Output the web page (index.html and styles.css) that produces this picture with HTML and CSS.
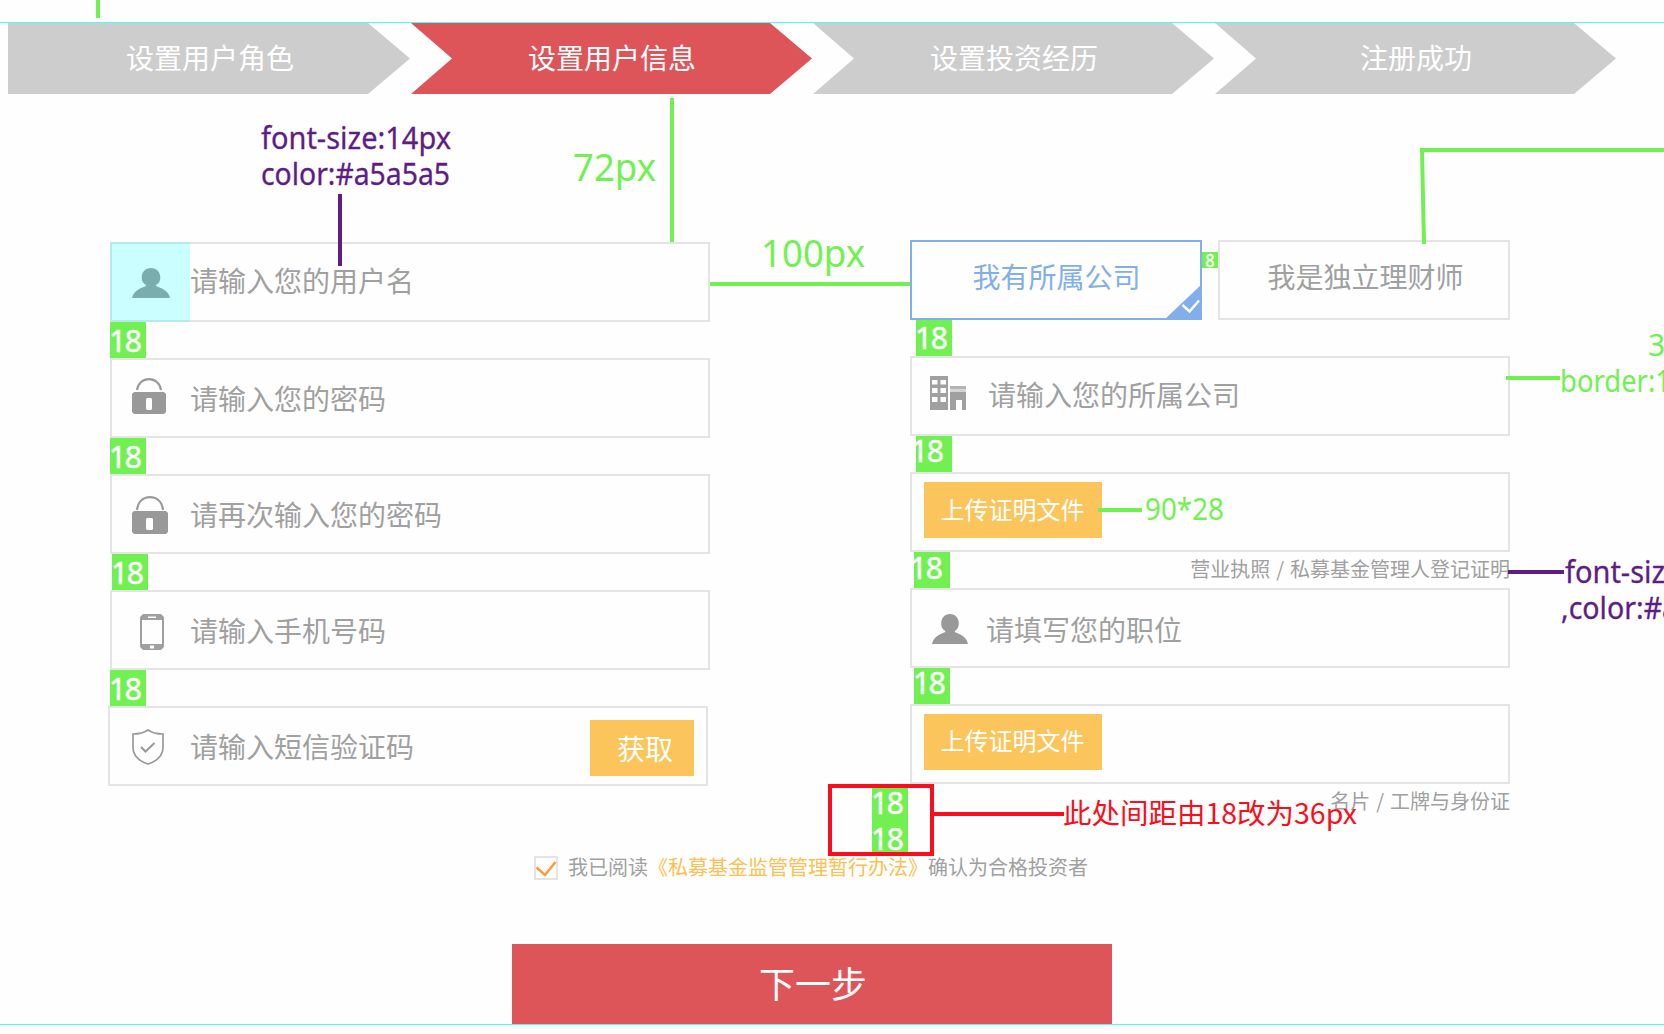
FILE: index.html
```html
<!DOCTYPE html>
<html lang="zh-CN">
<head>
<meta charset="utf-8">
<title>设置用户信息</title>
<link rel="stylesheet" href="styles.css">
</head>
<body>
<div class="page">
  <header class="steps">
    <div class="step step-first">设置用户角色</div>
    <div class="step step-active">设置用户信息</div>
    <div class="step">设置投资经历</div>
    <div class="step">注册成功</div>
  </header>

  <main class="form">
    <section class="col col-left">
      <div class="field">
        <span class="icon icon-user">
          <svg width="38" height="30" viewBox="0 0 38 30"><path fill="#999" d="M19 0c5.500 0 9.300 4 9.300 9.500 0 3.500-1.500 6-4.300 7.500v1c2 1 4 1.600 6 2.600 4 2 7 5 8 9.400H0c1-4.400 4-7.400 8-9.400 2-1 4-1.600 6-2.600v-1c-2.800-1.500-4.300-4-4.300-7.500C9.700 4 13.500 0 19 0z"/></svg>
        </span>
        <span class="ph up">请输入您的用户名</span>
      </div>
      <div class="field">
        <span class="icon icon-lock">
          <svg width="34" height="36" viewBox="0 0 34 36"><path d="M5 12C6 5 11 1.200 17 1.200S28 5 29 12" fill="none" stroke="#999" stroke-width="2.200"/><path fill="#999" fill-rule="evenodd" d="M2 14h30l2 2v18l-2 2H2l-2-2V16zM15 20l-1 1v10l1 1h4l1-1V21l-1-1z"/></svg>
        </span>
        <span class="ph">请输入您的密码</span>
      </div>
      <div class="field">
        <span class="icon icon-relock">
          <svg width="36" height="38" viewBox="0 0 36 38"><path d="M5 14C6 6 11 1.200 18 1.200S30 6 31 14" fill="none" stroke="#999" stroke-width="2.200"/><path fill="#999" fill-rule="evenodd" d="M2 15h32l2 2v19l-2 2H2l-2-2V17zM15 22l-1 1v10l1 1h5l1-1V23l-1-1z"/></svg>
        </span>
        <span class="ph">请再次输入您的密码</span>
      </div>
      <div class="field">
        <span class="icon icon-phone">
          <svg width="24" height="36" viewBox="0 0 24 36"><path fill="#a0a0a0" fill-rule="evenodd" d="M3 0h18l3 3v30l-3 3H3l-3-3V3zM2 6v24h20V6zM8 2.500v1.500h8V2.500zM10 31.500v3h4v-3z"/></svg>
        </span>
        <span class="ph">请输入手机号码</span>
      </div>
      <div class="field field-code">
        <span class="icon">
          <svg width="32" height="36" viewBox="0 0 32 36" fill="none" stroke="#999"><path stroke-width="1.700" d="M16 1C12.500 3.500 7 5 1 5v13c0 8 6 14 15 17 9-3 15-9 15-17V5C25 5 19.500 3.500 16 1z"/><path stroke-width="2" d="M9 18l4.500 4.500L22.500 14"/></svg>
        </span>
        <span class="ph">请输入短信验证码</span>
        <button class="btn btn-code">获取</button>
      </div>
    </section>

    <section class="col col-right">
      <div class="tabs">
        <div class="tab tab-on">我有所属公司
          <svg class="corner" width="38" height="36" viewBox="0 0 38 36"><path fill="#82aeec" d="M38 0v36H0z"/><path fill="none" stroke="#fff" stroke-width="2.400" d="M18.500 21l7 6.500L35 16.500"/></svg>
        </div>
        <div class="tab">我是独立理财师</div>
      </div>
      <div class="field">
        <span class="icon icon-company">
          <svg width="36" height="34" viewBox="0 0 36 34"><path fill="#a0a0a0" fill-rule="evenodd" d="M0 0h18v34H0zM2 4v4.500h5.500V4zM10.500 4v4.500H16V4zM2 12v5h5.500v-5zM10.500 12v5H16v-5zM2 21v5h5.500v-5zM10.500 21v5H16v-5zM20 16h16v18h-4V24h-6v10h-6z"/><path fill="#b4b4b4" d="M20 10h16v3H20z"/><path fill="#d5d5d5" d="M20 13h16v3H20z"/></svg>
        </span>
        <span class="ph ph-company">请输入您的所属公司</span>
      </div>
      <div class="field field-upload"><button class="btn">上传证明文件</button><p class="hint">营业执照 / 私募基金管理人登记证明</p></div>
      <div class="field">
        <span class="icon icon-job">
          <svg width="36" height="30" viewBox="0 0 38 30" preserveAspectRatio="none"><path fill="#999" d="M19 0c5.500 0 9.300 4 9.300 9.500 0 3.500-1.500 6-4.300 7.500v1c2 1 4 1.600 6 2.600 4 2 7 5 8 9.400H0c1-4.400 4-7.400 8-9.400 2-1 4-1.600 6-2.600v-1c-2.800-1.500-4.300-4-4.300-7.500C9.700 4 13.500 0 19 0z"/></svg>
        </span>
        <span class="ph ph-job">请填写您的职位</span>
      </div>
      <div class="field field-upload"><button class="btn btn-low">上传证明文件</button><p class="hint">名片 / 工牌与身份证</p></div>
    </section>
  </main>

  <div class="agree">
    <span class="check"><svg width="20" height="16" viewBox="0 0 20 16"><path fill="none" stroke="#fb9f3c" stroke-width="2.600" d="M.5 6.500L9 14 19.500 1"/></svg></span>
    <span>我已阅读<a>《私募基金监管管理暂行办法》</a>确认为合格投资者</span>
  </div>

  <button class="next">下一步</button>
  <div class="guide"></div>

  <svg class="notes" width="1664" height="1034" viewBox="0 0 1664 1034">
    <rect x="110" y="242" width="80" height="80" fill="#0ff" opacity=".2"/>
    <g fill="#71f151">
      <rect x="96" y="0" width="4" height="18"/>
      <rect x="670" y="98" width="4" height="144"/>
      <rect x="710" y="282" width="200" height="4"/>
      <path d="M1420 148h244v4h-240l2 92h-4z"/>
      <rect x="1506" y="376" width="54" height="4"/>
      <rect x="1098" y="508" width="44" height="4"/>
      <rect x="110" y="322" width="36" height="36"/>
      <rect x="110" y="438" width="36" height="36"/>
      <rect x="112" y="554" width="36" height="36"/>
      <rect x="110" y="670" width="36" height="36"/>
      <rect x="916" y="320" width="36" height="36"/>
      <rect x="916" y="436" width="36" height="36"/>
      <rect x="914" y="552" width="36" height="36"/>
      <rect x="914" y="668" width="36" height="36"/>
      <rect x="1202" y="252" width="16" height="16"/>
      <rect x="872" y="786" width="36" height="68"/>
    </g>
    <g class="num" fill="#fff" stroke="#fff" stroke-width=".5">
      <text x="109" y="351.500" textLength="33">18</text>
      <text x="109" y="467.500" textLength="33">18</text>
      <text x="111" y="583.500" textLength="33">18</text>
      <text x="109" y="699.500" textLength="33">18</text>
      <text x="915" y="349" textLength="33">18</text>
      <text x="911" y="462" textLength="33">18</text>
      <text x="910" y="578.500" textLength="33">18</text>
      <text x="913" y="694" textLength="33">18</text>
      <text x="871" y="813.500" textLength="33">18</text>
      <text x="871" y="849.500" textLength="33">18</text>
      <text class="tiny" x="1205.500" y="266.500" textLength="9" lengthAdjust="spacingAndGlyphs">8</text>
    </g>
    <g class="num" fill="#71f151">
      <text class="big" x="573" y="181" textLength="83" lengthAdjust="spacingAndGlyphs">72px</text>
      <text class="big" x="761" y="266.500" textLength="104" lengthAdjust="spacingAndGlyphs">100px</text>
      <text x="1145" y="520" textLength="79" lengthAdjust="spacingAndGlyphs">90*28</text>
      <text x="1648" y="356">3</text>
      <text x="1560" y="392" textLength="111" lengthAdjust="spacingAndGlyphs">border:1</text>
    </g>
    <g fill="#5e1d86">
      <rect x="338" y="194" width="4" height="72"/>
      <rect x="1508" y="570" width="56" height="4"/>
      <g class="num" stroke="#5e1d86" stroke-width=".3">
        <text x="261" y="149" textLength="190" lengthAdjust="spacingAndGlyphs">font-size:14px</text>
        <text x="261" y="185" textLength="189" lengthAdjust="spacingAndGlyphs">color:#a5a5a5</text>
        <text x="1565" y="583" textLength="190" lengthAdjust="spacingAndGlyphs">font-size:12px</text>
        <text x="1561" y="619" textLength="198" lengthAdjust="spacingAndGlyphs">,color:#a5a5a5</text>
      </g>
    </g>
    <g fill="#fc0d1b">
      <rect x="830" y="786" width="102" height="68" fill="none" stroke="#fc0d1b" stroke-width="4"/>
      <rect x="934" y="812" width="130" height="4"/>
      <text class="red" x="1063" y="824" textLength="294" lengthAdjust="spacingAndGlyphs">此处间距由18改为36px</text>
    </g>
  </svg>
</div>
</body>
</html>
```
FILE: styles.css
```css
* { box-sizing: border-box; }
body { margin: 0; background: #fefefe; }
body, button { font-family: "Noto Sans", "Noto Sans CJK SC", sans-serif; }
button { border: 0; padding: 0; margin: 0; color: #fff; }
.page {
  position: relative;
  width: 1664px;
  height: 1034px;
  overflow: hidden;
  display: flex;
  flex-direction: column;
  font-family: "Noto Sans CJK SC", sans-serif;
  color: #a0a0a0;
}
.steps {
  margin-top: 22px;
  height: 72px;
  border-top: 1px solid #4ff;
  padding-left: 8px;
  display: flex;
  flex: none;
}
.step {
  width: 402px;
  height: 71px;
  padding-left: 2px;
  background: #cdcdcd;
  color: #fff;
  font-size: 28px;
  line-height: 68px;
  text-align: center;
  clip-path: polygon(1px 0, 360px 0, 402px 50%, 360px 100%, 1px 100%, 42px 50%);
}
.step-first { clip-path: polygon(0 0, 360px 0, 402px 50%, 360px 100%, 0 100%); }
.step-active { background: #de5559; }

.form {
  display: flex;
  gap: 200px;
  padding: 146px 0 0 110px;
  flex: none;
}
.col {
  width: 600px;
  display: flex;
  flex-direction: column;
  gap: 36px;
}
.col-left { padding-top: 2px; }
.field {
  height: 80px;
  border: 2px solid #e4e4e4;
  display: flex;
  align-items: center;
  font-size: 28px;
  position: relative;
}
.field-code { margin-left: -2px; margin-right: 2px; }
.icon { width: 78px; padding-left: 20px; display: flex; }
.icon-user { padding-top: 2px; }
.icon-lock { padding-bottom: 4px; }
.icon-relock { padding-top: 2px; }
.icon-phone { padding: 4px 0 0 28px; }
.field-code .icon { width: 80px; padding: 2px 0 0 22px; }
.icon-company { width: 76px; padding: 0 0 6px 18px; }
.icon-job { width: 74px; padding: 2px 0 0 20px; }
.ph { line-height: 40px; }
.up { padding-bottom: 4px; }
.ph-company { padding-bottom: 5px; }
.ph-job { padding-top: 2px; }
.btn {
  width: 178px;
  height: 56px;
  background: #fbc55c;
  font: 24px/50px "Noto Sans CJK SC", sans-serif;
  padding: 0 1px 2px 0;
}
.btn-code {
  width: 104px;
  margin: 4px 12px 0 auto;
  font-size: 28px;
  padding: 0 0 0 6px;
}
.field-upload { padding: 0 0 4px 12px; }
.btn-low { line-height: 48px; padding-bottom: 4px; }
.hint {
  position: absolute;
  top: 81px;
  right: -2px;
  margin: 0;
  font-size: 20px;
  line-height: 28px;
  white-space: pre;
  word-spacing: 1.500px;
}
.tabs { display: flex; gap: 16px; }
.tab {
  position: relative;
  width: 292px;
  height: 80px;
  border: 2px solid #e4e4e4;
  padding-left: 3px;
  font-size: 28px;
  line-height: 68px;
  text-align: center;
}
.tab-on { padding: 0; border-color: #82aeec; color: #82aeec; padding-left: 1px; }
.corner { position: absolute; right: -2px; bottom: -2px; }

.agree {
  margin: 70px 0 0 534px;
  height: 26px;
  display: flex;
  gap: 10px;
  font-size: 20px;
  line-height: 22px;
}
.agree a { color: #fbc052; }
.check {
  width: 24px;
  height: 24px;
  border: 2px solid #e4e4e4;
  display: flex;
  align-items: center;
  padding-top: 2px;
}
.next {
  margin: 62px 0 0 512px;
  width: 600px;
  height: 80px;
  flex: none;
  background: #de5559;
  font: 36px/74px "Noto Sans CJK SC", sans-serif;
  padding: 0 0 4px 2px;
}
.guide { height: 1px; flex: none; background: #4ff; }

.notes { position: absolute; left: 0; top: 0; }
.num { font: 30px "Noto Sans", sans-serif; }
.num text { font-family: "Noto Sans", "Open Sans", sans-serif; }
.big { font-size: 38px; }
.tiny { font-size: 18px; }
.red { font: 28px "Noto Sans CJK SC", sans-serif; }
```
